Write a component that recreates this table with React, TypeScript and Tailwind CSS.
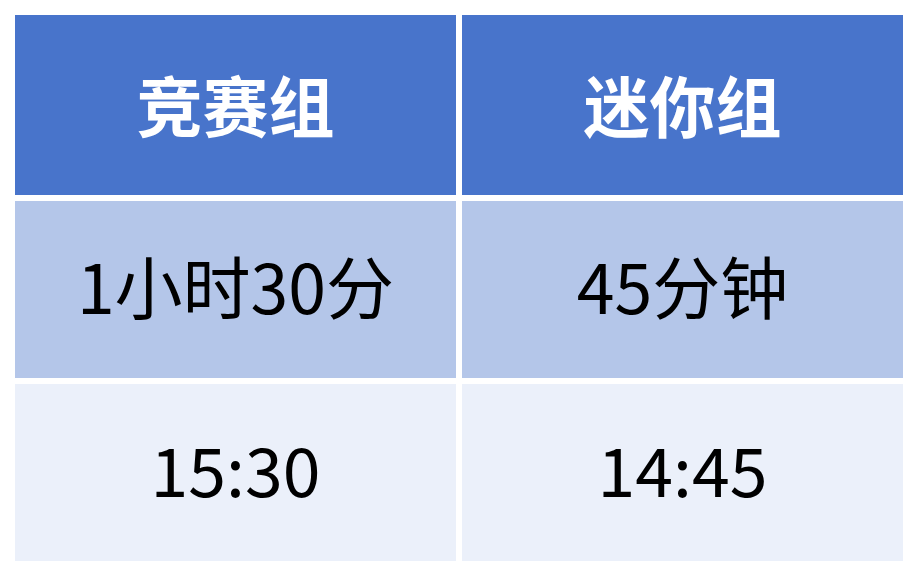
const ROWS = [
  { cells: ['竞赛组', '迷你组'], tone: 'head' },
  { cells: ['1小时30分', '45分钟'], tone: 'mid' },
  { cells: ['15:30', '14:45'], tone: 'light' },
] as const

export default function App() {
  return (
    <div className="h-[576px] w-[918px] bg-white pl-[15px] pt-[15px] font-['Noto_Sans_CJK_SC',sans-serif]">
      <div className="grid grid-cols-[441px_441px] grid-rows-[180px_177px_177px] gap-[6px]">
        {ROWS.map((row) =>
          row.cells.map((text) => (
            <div
              key={text}
              className={
                row.tone === 'head'
                  ? 'flex items-center justify-center bg-[#4874CB] pb-[4px] text-[66px] font-bold text-white'
                  : row.tone === 'mid'
                    ? 'flex items-center justify-center bg-[#B4C6E9] pb-[10px] text-[68px] text-black'
                    : 'flex items-center justify-center bg-[#EBF0FA] pb-[10px] text-[68px] text-black'
              }
            >
              {text}
            </div>
          )),
        )}
      </div>
    </div>
  )
}
